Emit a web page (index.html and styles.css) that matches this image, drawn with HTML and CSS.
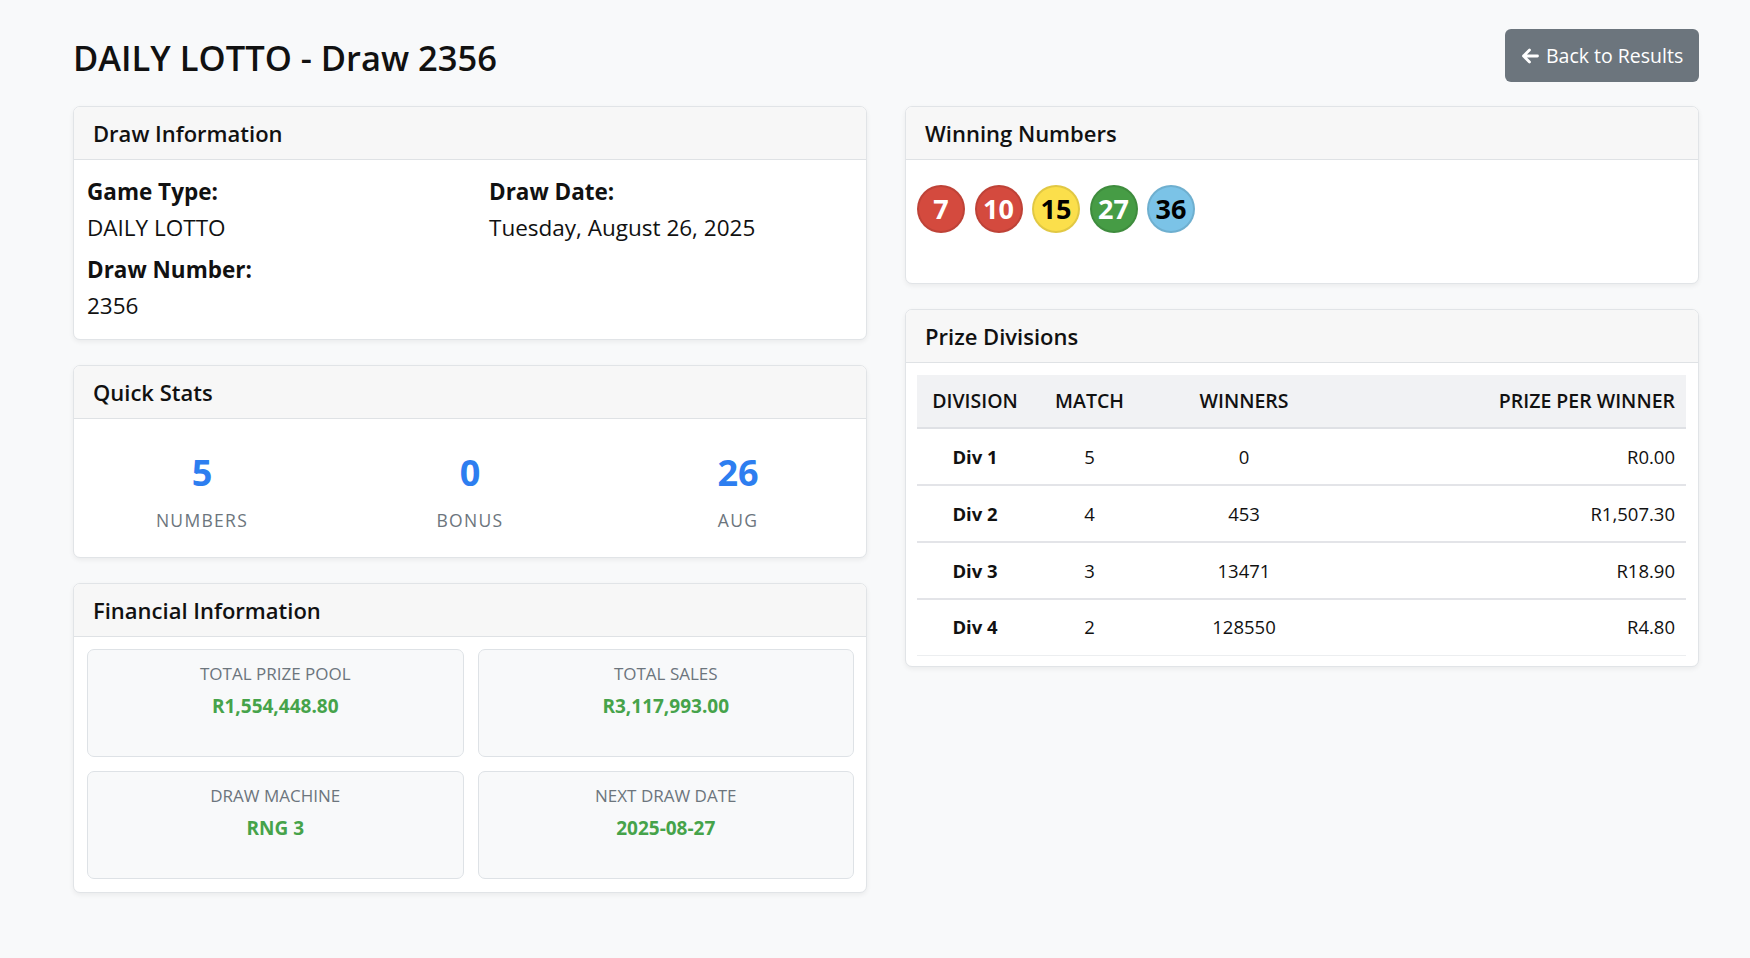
FILE: index.html
```html
<!DOCTYPE html>
<html lang="en">
<head>
<meta charset="utf-8">
<title>DAILY LOTTO - Draw 2356</title>
<link rel="stylesheet" href="styles.css">
</head>
<body>
<div class="page">
  <header class="top">
    <h1 class="title">DAILY LOTTO - Draw 2356</h1>
    <a class="btn-back" href="#">
      <svg class="arrow" viewBox="0 0 18 16" width="18" height="16" aria-hidden="true">
        <path d="M16.5 8H2.5M8.5 2L2.5 8l6 6" fill="none" stroke="#fff" stroke-width="2.8" stroke-linecap="round" stroke-linejoin="round"/>
      </svg>
      <span>Back to Results</span>
    </a>
  </header>

  <div class="columns">
    <div class="col">
      <section class="card">
        <div class="card-header">Draw Information</div>
        <div class="card-body info-body">
          <div class="info-grid">
            <div class="info-item">
              <div class="info-label">Game Type:</div>
              <div class="info-value">DAILY LOTTO</div>
            </div>
            <div class="info-item">
              <div class="info-label">Draw Date:</div>
              <div class="info-value">Tuesday, August 26, 2025</div>
            </div>
            <div class="info-item">
              <div class="info-label">Draw Number:</div>
              <div class="info-value">2356</div>
            </div>
          </div>
        </div>
      </section>

      <section class="card">
        <div class="card-header">Quick Stats</div>
        <div class="card-body stats-body">
          <div class="stats-grid">
            <div class="stat">
              <div class="stat-num">5</div>
              <div class="stat-label">NUMBERS</div>
            </div>
            <div class="stat">
              <div class="stat-num">0</div>
              <div class="stat-label">BONUS</div>
            </div>
            <div class="stat">
              <div class="stat-num">26</div>
              <div class="stat-label">AUG</div>
            </div>
          </div>
        </div>
      </section>

      <section class="card">
        <div class="card-header">Financial Information</div>
        <div class="card-body fin-body">
          <div class="fin-grid">
            <div class="fin-box">
              <div class="fin-label">TOTAL PRIZE POOL</div>
              <div class="fin-value">R1,554,448.80</div>
            </div>
            <div class="fin-box">
              <div class="fin-label">TOTAL SALES</div>
              <div class="fin-value">R3,117,993.00</div>
            </div>
            <div class="fin-box">
              <div class="fin-label">DRAW MACHINE</div>
              <div class="fin-value">RNG 3</div>
            </div>
            <div class="fin-box">
              <div class="fin-label">NEXT DRAW DATE</div>
              <div class="fin-value">2025-08-27</div>
            </div>
          </div>
        </div>
      </section>
    </div>

    <div class="col">
      <section class="card">
        <div class="card-header">Winning Numbers</div>
        <div class="card-body balls-body">
          <div class="balls">
            <span class="ball red">7</span>
            <span class="ball red">10</span>
            <span class="ball yellow">15</span>
            <span class="ball green">27</span>
            <span class="ball blue">36</span>
          </div>
        </div>
      </section>

      <section class="card">
        <div class="card-header">Prize Divisions</div>
        <div class="card-body table-body">
          <table class="prizes">
            <thead>
              <tr>
                <th class="c-div">DIVISION</th>
                <th class="c-match">MATCH</th>
                <th class="c-win">WINNERS</th>
                <th class="c-prize">PRIZE PER WINNER</th>
              </tr>
            </thead>
            <tbody>
              <tr><td class="c-div div-name">Div 1</td><td class="c-match">5</td><td class="c-win">0</td><td class="c-prize prize">R0.00</td></tr>
              <tr><td class="c-div div-name">Div 2</td><td class="c-match">4</td><td class="c-win">453</td><td class="c-prize prize">R1,507.30</td></tr>
              <tr><td class="c-div div-name">Div 3</td><td class="c-match">3</td><td class="c-win">13471</td><td class="c-prize prize">R18.90</td></tr>
              <tr class="last"><td class="c-div div-name">Div 4</td><td class="c-match">2</td><td class="c-win">128550</td><td class="c-prize prize">R4.80</td></tr>
            </tbody>
          </table>
        </div>
      </section>
    </div>
  </div>
</div>
</body>
</html>
```

FILE: styles.css
```css
* { box-sizing: border-box; }

html, body {
  margin: 0;
  padding: 0;
}

body {
  background: #f8f9fa;
  color: #212529;
  font-family: "Open Sans", "Noto Sans", "Liberation Sans", sans-serif;
  font-size: 22.5px;
  line-height: 1.5;
}

.page {
  padding: 29px 51px 40px 73px;
}

.top {
  display: flex;
  align-items: center;
  justify-content: space-between;
  height: 53px;
}

.title {
  margin: 0;
  font-size: 34.5px;
  font-weight: 600;
  line-height: 1.2;
  color: #111;
  position: relative;
  top: 2px;
}

.btn-back {
  display: flex;
  align-items: center;
  gap: 7px;
  height: 53px;
  width: 194px;
  padding: 0 0 0 16px;
  background: #6c757d;
  color: #fff;
  text-decoration: none;
  font-size: 19.5px;
  border-radius: 6px;
}

.arrow { display: block; }

.columns {
  display: grid;
  grid-template-columns: 794px 794px;
  column-gap: 38px;
  margin-top: 24px;
  align-items: start;
}

.col {
  display: flex;
  flex-direction: column;
  gap: 25px;
}

.card {
  background: #fff;
  border: 1px solid #e1e4e7;
  border-radius: 7px;
  box-shadow: 0 2px 5px rgba(0, 0, 0, 0.06);
  overflow: hidden;
}

.card-header {
  height: 53px;
  padding: 0 19px;
  display: flex;
  align-items: center;
  background: #f7f7f7;
  border-bottom: 1px solid #dfe2e5;
  font-size: 22px;
  font-weight: 600;
  color: #111;
}

/* Draw information */
.info-body {
  padding: 14px 13px 15px 13px;
}

.info-grid {
  display: grid;
  grid-template-columns: 402px 1fr;
  row-gap: 6px;
}

.info-label {
  font-weight: 700;
  line-height: 36px;
  color: #111;
}

.info-value {
  line-height: 36px;
  color: #111;
}

/* Quick stats */
.stats-body {
  padding: 32px 0 24px;
}

.stats-grid {
  display: grid;
  grid-template-columns: repeat(3, 1fr);
  margin: 0 -6px;
  text-align: center;
}

.stat-num {
  font-size: 36px;
  font-weight: 700;
  line-height: 43px;
  color: #2d7ef0;
}

.stat-label {
  margin-top: 13px;
  font-size: 17.5px;
  font-weight: 500;
  line-height: 26px;
  letter-spacing: 1.3px;
  color: #6c757d;
}

/* Financial */
.fin-body {
  padding: 12px 12px 13px 13px;
}

.fin-grid {
  display: grid;
  grid-template-columns: 1fr 1fr;
  gap: 14px;
}

.fin-box {
  height: 108px;
  padding-top: 12px;
  background: #f8f9fa;
  border: 1px solid #dee2e6;
  border-radius: 7px;
  text-align: center;
}

.fin-label {
  font-size: 17px;
  font-weight: 500;
  line-height: 24px;
  color: #6c757d;
}

.fin-value {
  margin-top: 7px;
  font-size: 19px;
  line-height: 26px;
  font-weight: 700;
  color: #46a34a;
}

/* Winning numbers */
.balls-body {
  padding: 25px 11px 50px;
}

.balls {
  display: flex;
  gap: 9.5px;
}

.ball {
  width: 48px;
  height: 48px;
  border-radius: 50%;
  display: flex;
  align-items: center;
  justify-content: center;
  font-size: 27px;
  font-weight: 700;
  border: 2px solid rgba(0, 0, 0, 0.1);
}

.ball.red { background: #d44a3e; color: #fff; }
.ball.yellow { background: #fbdf4b; color: #000; }
.ball.green { background: #469c45; color: #fff; }
.ball.blue { background: #7bc3e7; color: #000; }

/* Prize table */
.table-body {
  padding: 12px 12px 10px 11px;
}

.prizes {
  width: 100%;
  border-collapse: collapse;
  table-layout: fixed;
  font-size: 18.5px;
  color: #111;
}

.prizes th {
  height: 53px;
  background: #f1f2f4;
  border-bottom: 2px solid #dfe1e5;
  font-size: 19.5px;
  font-weight: 600;
  padding: 0;
}

.prizes td {
  height: 57px;
  padding: 0;
  font-weight: 500;
  border-bottom: 2px solid #e3e4e8;
}

.prizes tr.last td {
  height: 56px;
  border-bottom: 1px solid #eceef0;
}

.c-div { width: 116px; text-align: center; }
.c-match { width: 113px; text-align: center; }
.c-win { width: 196px; text-align: center; }
.c-prize { text-align: right; padding-right: 11px !important; }

.prizes td.div-name { font-weight: 700; }
.prizes td.prize { font-weight: 500; }
```
